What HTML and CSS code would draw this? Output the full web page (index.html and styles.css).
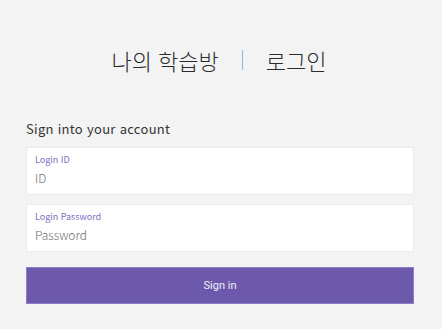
FILE: index.html
```html
<!DOCTYPE html>
<html lang="ko">
<head>
  <meta charset="UTF-8" />
  <meta name="viewport" content="width=device-width, initial-scale=1.0"/>
  <title>나의 학습방 | 로그인</title>
  <link rel="stylesheet" href="styles.css">
</head>
<body>
  <div class="login">
    <h1 class="login-title">
      <span>나의 학습방</span>
      <span class="bar"></span>
      <span>로그인</span>
    </h1>

    <form class="login-form" onsubmit="return false">
      <p class="form-caption">Sign into your account</p>
      <label class="field">
        <span class="field-label">Login ID</span>
        <input type="text" placeholder="ID" />
      </label>
      <label class="field">
        <span class="field-label">Login Password</span>
        <input type="password" placeholder="Password" />
      </label>
      <button type="submit">Sign in</button>
    </form>
  </div>
</body>
</html>
```

FILE: styles.css
```css
body {
  margin: 0;
  background: #f3f3f3;
  font-family: "Noto Sans CJK KR", "Noto Sans", sans-serif;
  color: #333;
}

.login {
  padding: 0 28px 0 26px;
}

.login-title {
  display: flex;
  justify-content: center;
  align-items: center;
  gap: 23px;
  margin: 0;
  padding: 44px 2px 0 0;
  height: 32px;
  font-size: 22px;
  font-weight: 300;
  color: #2b2b2b;
}

.login-title .bar {
  width: 1px;
  height: 20px;
  background: #8fb8d8;
}

.login-form {
  margin-top: 44px;
}

.form-caption {
  margin: 0 0 9px;
  font-size: 13px;
  letter-spacing: 0.3px;
  line-height: 18px;
}

.field {
  display: flex;
  flex-direction: column;
  background: #fff;
  border: 1px solid #ececec;
  height: 48px;
  box-sizing: border-box;
  padding: 6px 8px 0;
  margin-bottom: 9px;
}

.field-label {
  font-size: 9px;
  line-height: 12px;
  color: #7b70c2;
}

.field input {
  border: none;
  outline: none;
  padding: 3px 0 0;
  font-family: inherit;
  font-size: 12px;
  font-weight: 300;
  color: #333;
  background: transparent;
}

.field input::placeholder {
  color: #6f6f6f;
}

button {
  display: block;
  width: 100%;
  height: 37px;
  margin-top: 15px;
  border: 1px solid #8c7fc6;
  background: #6c59ac;
  color: #f2f0fa;
  font-family: Roboto, sans-serif;
  font-size: 11px;
  cursor: pointer;
}
```
